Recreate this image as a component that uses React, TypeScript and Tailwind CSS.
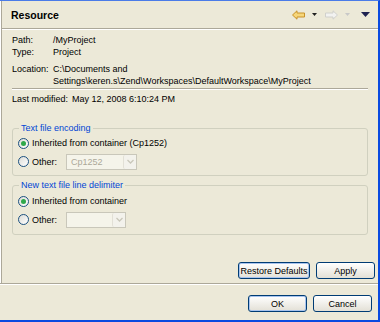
import React from 'react';

const font = { fontFamily: '"Liberation Sans", Arial, sans-serif' };

function Radio({ checked }: { checked?: boolean }) {
  return (
    <span className="flex items-center justify-center w-[11px] h-[11px] rounded-full border border-[#1C5180] bg-gradient-to-br from-[#DCDCD7] to-white shrink-0">
      {checked && <span className="w-[5px] h-[5px] rounded-full bg-[#2FA84A]" />}
    </span>
  );
}

function Combo({ width, value }: { width: string; value?: string }) {
  return (
    <div className={`${width} h-[16px] flex items-center border border-[#C9C7BA] bg-[#F5F4EA]`}>
      <span className="flex-1 pl-[4px] text-[#ACA899]">{value}</span>
      <span className="w-[13px] h-[14px] flex items-center justify-center bg-[#F3F2EC] border-l border-[#E2E0D6] rounded-[2px]">
        <svg width="7" height="5" viewBox="0 0 7 5">
          <path d="M0.5 1 L3.5 4 L6.5 1" fill="none" stroke="#C9C7BA" strokeWidth="1.3" />
        </svg>
      </span>
    </div>
  );
}

function Button({ label, width, focus }: { label: string; width: string; focus?: boolean }) {
  return (
    <button
      className={`${width} h-[17px] rounded-[3px] border border-[#003C74] bg-gradient-to-b from-white to-[#E3E0D6] text-[9px] text-black ${focus ? 'shadow-[inset_0_0_0_1px_#A8C4EE]' : ''}`}
    >
      {label}
    </button>
  );
}

export default function App() {
  return (
    <div
      className="w-[380px] h-[322px] flex flex-col bg-[#ECE9D8] border-t border-t-[#4A7BE8] border-r-2 border-r-[#0A4AE0] border-b-2 border-b-[#0A4AE0] text-[9px] text-black leading-[12px]"
      style={font}
    >
      <div className="h-[282px] flex flex-col border-l border-l-white">
        <div className="flex-1 flex flex-col border-l border-l-[#ACA899]">
          {/* header */}
          <div className="h-[28px] flex items-center justify-between pl-[9px] pr-[8px] border-b border-b-[#ACA899]">
            <span className="text-[10.5px] font-bold">Resource</span>
            <div className="flex items-center gap-[2px]">
              <svg width="13" height="10" viewBox="0 0 13 10">
                <path d="M0.5 5 L5 0.8 L5 3 L12.5 3 L12.5 7 L5 7 L5 9.2 Z" fill="#F6D67A" stroke="#C8922A" strokeWidth="1" />
              </svg>
              <svg width="7" height="4" viewBox="0 0 7 4" className="ml-[4px] mr-[5px]">
                <path d="M1 0 L6 0 L3.5 3 Z" fill="#202020" />
              </svg>
              <svg width="13" height="10" viewBox="0 0 13 10">
                <path d="M12.5 5 L8 0.8 L8 3 L0.5 3 L0.5 7 L8 7 L8 9.2 Z" fill="#F2F2F0" stroke="#D0D0CC" strokeWidth="1" />
              </svg>
              <svg width="7" height="4" viewBox="0 0 7 4" className="ml-[4px] mr-[8px]">
                <path d="M1 0 L6 0 L3.5 3 Z" fill="#C8C8C8" />
              </svg>
              <svg width="9" height="5" viewBox="0 0 9 5">
                <path d="M0 0 L9 0 L4.5 5 Z" fill="#1E2250" />
              </svg>
            </div>
          </div>
          <div className="h-px bg-white" />

          {/* body */}
          <div className="flex flex-col px-[10px]">
            <div className="flex pt-[4px]">
              <span className="w-[41px]">Path:</span>
              <span>/MyProject</span>
            </div>
            <div className="flex">
              <span className="w-[41px]">Type:</span>
              <span>Project</span>
            </div>
            <div className="flex mt-[5px]">
              <span className="w-[41px]">Location:</span>
              <span>
                C:\Documents and
                <br />
                Settings\keren.s\Zend\Workspaces\DefaultWorkspace\MyProject
              </span>
            </div>
            <div className="mt-[1px] h-px bg-[#ACA899]" />
            <div className="h-px bg-white" />
            <div className="flex mt-[3px]">
              <span className="w-[60px]">Last modified:</span>
              <span>May 12, 2008 6:10:24 PM</span>
            </div>

            <fieldset className="mt-[17px] border border-[#D0D0BF] rounded-[3px] pl-[5px] pb-[5px]">
              <legend className="px-[2px] text-[#0046D5] ml-[1px]">Text file encoding</legend>
              <div className="flex items-center gap-[3px] h-[16px] mt-px">
                <Radio checked />
                <span>Inherited from container (Cp1252)</span>
              </div>
              <div className="flex items-center h-[17px] mt-[2px]">
                <Radio />
                <span className="ml-[3px] w-[34px]">Other:</span>
                <Combo width="w-[71px]" value="Cp1252" />
              </div>
            </fieldset>

            <fieldset className="mt-[3px] border border-[#D0D0BF] rounded-[3px] pl-[5px] pb-[6px]">
              <legend className="px-[2px] text-[#0046D5] ml-[1px]">New text file line delimiter</legend>
              <div className="flex items-center gap-[3px] h-[16px] mt-[2px]">
                <Radio checked />
                <span>Inherited from container</span>
              </div>
              <div className="flex items-center h-[17px] mt-[2px]">
                <Radio />
                <span className="ml-[3px] w-[34px]">Other:</span>
                <Combo width="w-[60px]" />
              </div>
            </fieldset>
          </div>

          <div className="flex-1" />
          <div className="flex justify-end gap-[6px] pr-[3px] pb-[4px]">
            <Button label="Restore Defaults" width="w-[72px]" focus />
            <Button label="Apply" width="w-[59px]" />
          </div>
        </div>
      </div>
      <div className="h-px bg-[#ACA899]" />
      <div className="h-px bg-white" />
      <div className="flex-1 flex justify-end items-start gap-[6px] pt-[10px] pr-[6px]">
        <Button label="OK" width="w-[59px]" focus />
        <Button label="Cancel" width="w-[59px]" />
      </div>
    </div>
  );
}
